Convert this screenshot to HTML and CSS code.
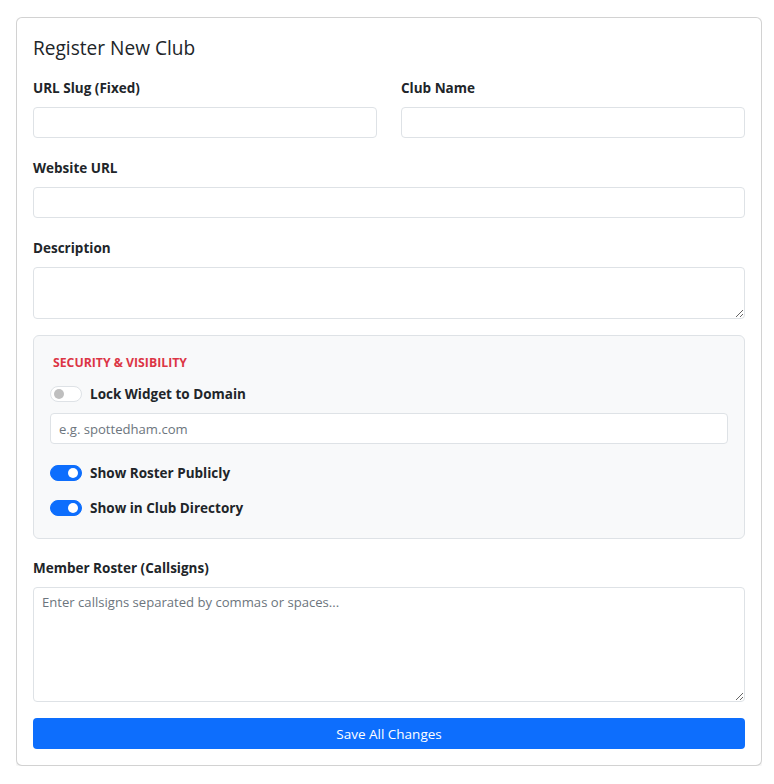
FILE: index.html
```html
<!DOCTYPE html>
<html lang="en">
<head>
<meta charset="utf-8">
<title>Register New Club</title>
<link rel="stylesheet" href="styles.css">
</head>
<body>
<div class="card">
  <h5 class="card-title">Register New Club</h5>
  <div class="row">
    <div class="group">
      <label class="form-label">URL Slug (Fixed)</label>
      <input class="form-control" type="text">
    </div>
    <div class="group">
      <label class="form-label">Club Name</label>
      <input class="form-control" type="text">
    </div>
  </div>
  <div class="group">
    <label class="form-label">Website URL</label>
    <input class="form-control" type="text">
  </div>
  <div class="group">
    <label class="form-label">Description</label>
    <textarea class="form-control desc"></textarea>
  </div>
  <div class="security">
    <div class="sec-title">SECURITY &amp; VISIBILITY</div>
    <div class="check first">
      <span class="switch"></span>
      <span class="check-label">Lock Widget to Domain</span>
    </div>
    <input class="form-control domain" type="text" placeholder="e.g. spottedham.com">
    <div class="check roster">
      <span class="switch on"></span>
      <span class="check-label">Show Roster Publicly</span>
    </div>
    <div class="check dir">
      <span class="switch on"></span>
      <span class="check-label">Show in Club Directory</span>
    </div>
  </div>
  <div class="group last">
    <label class="form-label">Member Roster (Callsigns)</label>
    <textarea class="form-control members" placeholder="Enter callsigns separated by commas or spaces..."></textarea>
  </div>
  <button class="btn">Save All Changes</button>
</div>
</body>
</html>
```

FILE: styles.css
```css
* { box-sizing: border-box; }
html, body { background: #fff; }
body {
  margin: 17px 12px 0 16px;
  font-family: "Open Sans", "Noto Sans", sans-serif;
  font-size: 14px;
  color: #212529;
}
.card {
  border: 1px solid rgba(0,0,0,.175);
  border-radius: 6px;
  box-shadow: 0 2px 4px rgba(0,0,0,.08);
  padding: 16px;
  background: #fff;
}
.card-title {
  margin: 2px 0 18px;
  font-size: 19.1px;
  font-weight: 400;
  line-height: 24px;
}
.row {
  display: grid;
  grid-template-columns: 1fr 1fr;
  column-gap: 24px;
}
.group { margin-bottom: 20px; }
.group.last { margin-bottom: 16px; }
.form-label {
  display: block;
  font-weight: 700;
  font-size: 13.5px;
  line-height: 21px;
  margin-bottom: 8px;
}
.form-control {
  display: block;
  width: 100%;
  height: 31px;
  border: 1px solid #dee2e6;
  border-radius: 4px;
  padding: 4px 8px;
  font-family: inherit;
  font-size: 13.1px;
  color: #212529;
  background: #fff;
  outline: none;
}
.form-control::placeholder { color: #6c757d; opacity: 1; }
textarea.form-control { resize: vertical; line-height: 21px; }
.desc { height: 52px; }
.members { height: 115px; }
.security {
  margin-top: -4px;
  margin-bottom: 19px;
  background: #f8f9fa;
  border: 1px solid #dee2e6;
  border-radius: 6px;
  padding: 18px 16px 20px;
}
.sec-title {
  color: #dc3545;
  font-weight: 700;
  font-size: 12.25px;
  line-height: 18px;
  margin-left: 3px;
}
.check {
  display: flex;
  align-items: center;
  gap: 8px;
  height: 21px;
}
.check.first { margin-top: 11px; }
.domain { margin-top: 9px; }
.check.roster { margin-top: 18px; }
.check.dir { margin-top: 14px; }
.switch {
  position: relative;
  width: 32px;
  height: 16px;
  border-radius: 8px;
  border: 1px solid #dee2e6;
  background: #fff;
  flex: none;
}
.switch::after {
  content: "";
  position: absolute;
  top: 2px;
  left: 3px;
  width: 10px;
  height: 10px;
  border-radius: 50%;
  background: #bfbfbf;
}
.switch.on { background: #0d6efd; border-color: #0d6efd; }
.switch.on::after { left: auto; right: 3px; background: #fff; }
.check-label {
  font-weight: 700;
  font-size: 13.5px;
}
.btn {
  display: block;
  width: 100%;
  height: 31px;
  border: 0;
  border-radius: 4px;
  background: #0d6efd;
  color: #fff;
  font-family: inherit;
  font-size: 13.5px;
}
```
